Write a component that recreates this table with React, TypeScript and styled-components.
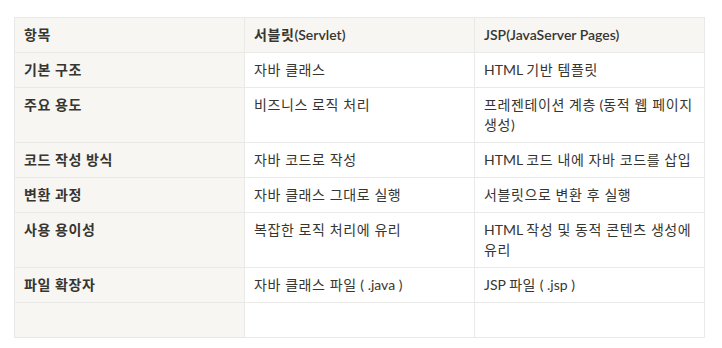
import React from 'react';
import styled, {createGlobalStyle} from 'styled-components';

const GlobalStyle = createGlobalStyle`
  html, body {
    margin: 0;
    background: #ffffff;
  }
  body {
    font-family: Lato, "Noto Sans CJK KR", sans-serif;
    color: #37352f;
  }
`;

const Page = styled.div`
  padding: 17px 14px;
`;

const Sheet = styled.div`
  display: grid;
  grid-template-columns: repeat(3, 230px);
  width: max-content;
  border-top: 1px solid #e9e9e7;
  border-left: 1px solid #e9e9e7;
  font-size: 14px;
  line-height: 20px;
`;

const Cell = styled.div<{ $head?: boolean }>`
  box-sizing: border-box;
  min-height: 35px;
  padding: 7px 8px 7px 9px;
  border-right: 1px solid #e9e9e7;
  border-bottom: 1px solid #e9e9e7;
  background: ${({$head}) => ($head ? '#f7f6f3' : '#ffffff')};
  font-weight: ${({$head}) => ($head ? 600 : 400)};
`;

// Hangul runs get a little extra tracking so they keep the wider set of the original
const Ko = styled.span`
  letter-spacing: 0.6px;
`;

const HANGUL_RUN = /([\uAC00-\uD7A3]+(?: +[\uAC00-\uD7A3]+)*)/;

const renderText = (text: string) =>
  text.split(HANGUL_RUN).map((part, i) => (i % 2 === 1 ? <Ko key={i}>{part}</Ko> : part));

const header = ['항목', '서블릿(Servlet)', 'JSP(JavaServer Pages)'];

const rows = [
  ['기본 구조', '자바 클래스', 'HTML 기반 템플릿'],
  ['주요 용도', '비즈니스 로직 처리', '프레젠테이션 계층 (동적 웹 페이지 생성)'],
  ['코드 작성 방식', '자바 코드로 작성', 'HTML 코드 내에 자바 코드를 삽입'],
  ['변환 과정', '자바 클래스 그대로 실행', '서블릿으로 변환 후 실행'],
  ['사용 용이성', '복잡한 로직 처리에 유리', 'HTML 작성 및 동적 콘텐츠 생성에 유리'],
  ['파일 확장자', '자바 클래스 파일 ( .java )', 'JSP 파일 ( .jsp )'],
  ['', '', '']
];

export default function App() {
  return (
    <Page>
      <GlobalStyle/>
      <Sheet>
        {header.map((text) => <Cell $head key={text}>{renderText(text)}</Cell>)}
        {rows.map((row, i) =>
          row.map((text, j) => <Cell $head={j === 0} key={`${i}-${j}`}>{renderText(text)}</Cell>)
        )}
      </Sheet>
    </Page>
  );
}
